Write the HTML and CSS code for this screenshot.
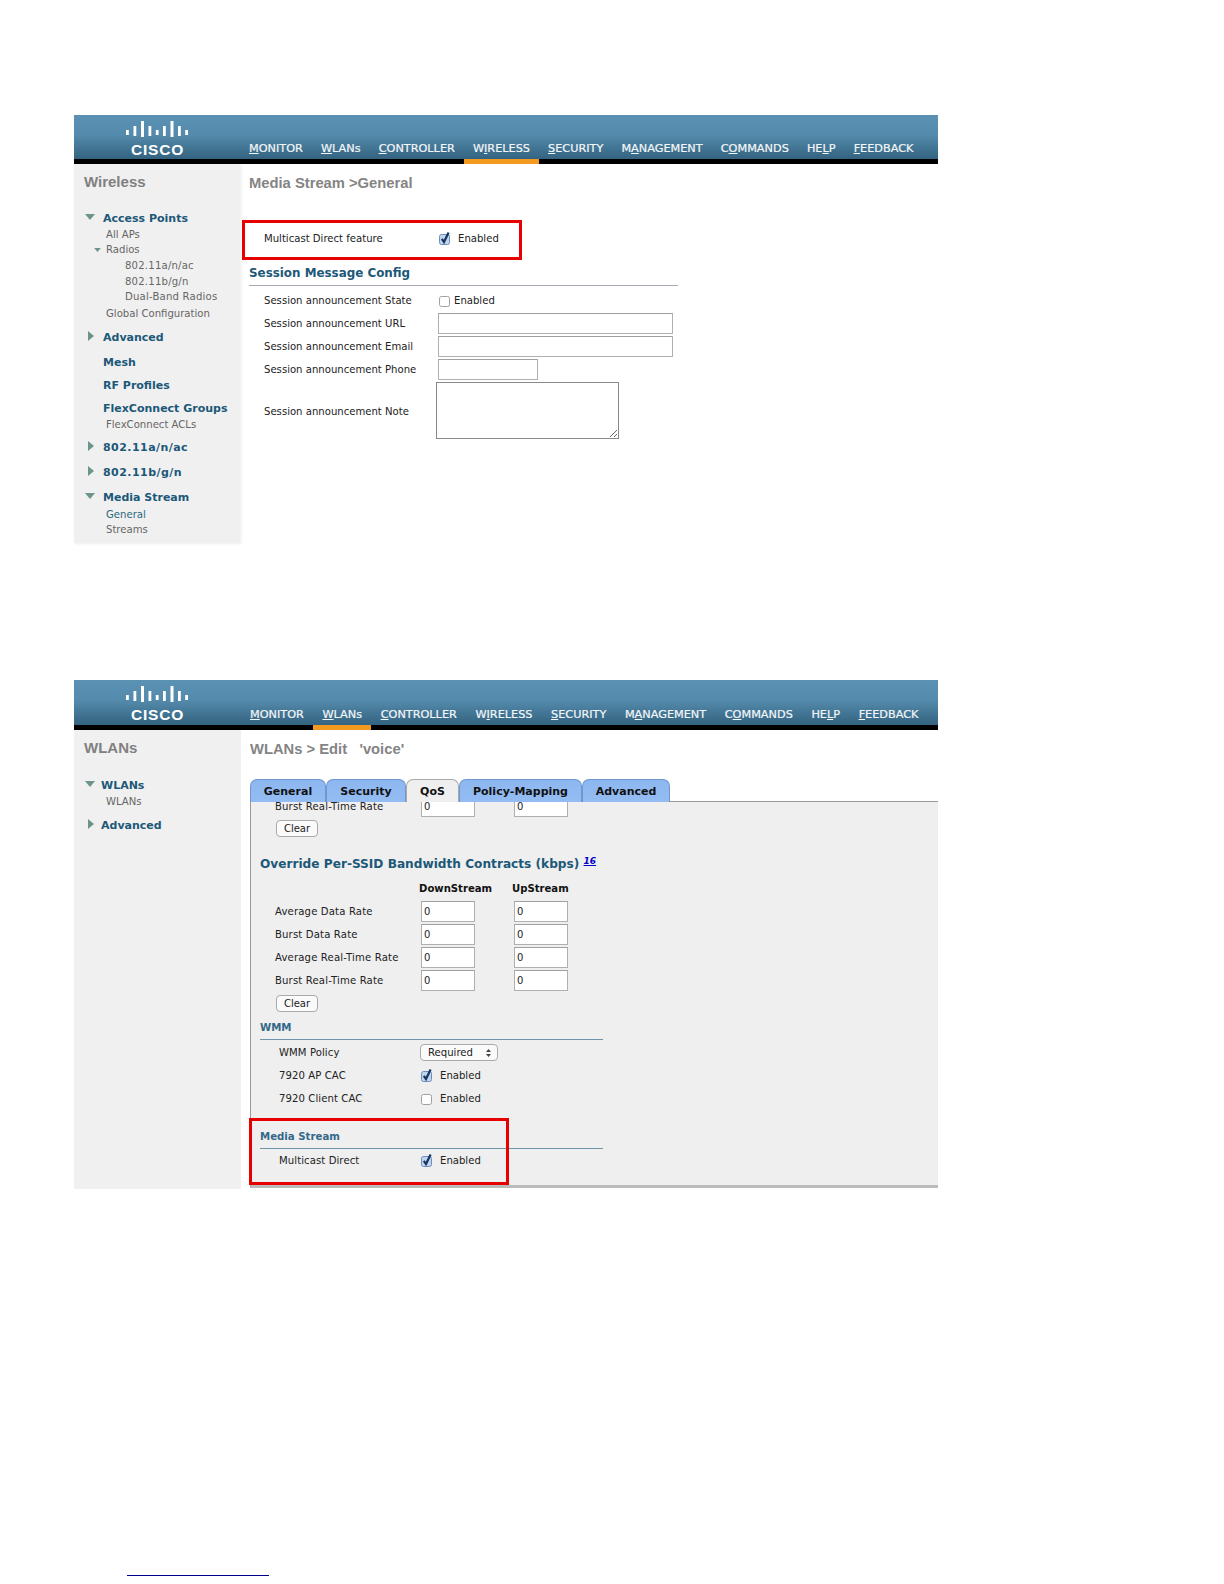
FILE: index.html
```html
<!DOCTYPE html>
<html lang="en">
<head>
<meta charset="utf-8">
<title>Cisco WLC Media Stream</title>
<link rel="stylesheet" href="styles.css">
</head>
<body>
<svg class="defs" width="0" height="0" aria-hidden="true">
  <symbol id="bars" viewBox="0 0 62 17">
    <g fill="#fff">
      <rect x="0" y="9" width="2.8" height="5"/>
      <rect x="7.5" y="5" width="2.8" height="10"/>
      <rect x="15" y="0" width="3" height="16"/>
      <rect x="22.5" y="5" width="2.8" height="10"/>
      <rect x="29.8" y="9" width="2.8" height="5"/>
      <rect x="37" y="5" width="2.8" height="10"/>
      <rect x="44.5" y="0" width="3" height="16"/>
      <rect x="52" y="5" width="2.8" height="10"/>
      <rect x="59.2" y="9" width="2.8" height="5"/>
    </g>
  </symbol>
  <symbol id="chk" viewBox="0 0 13 13">
    <rect x="1.5" y="2.5" width="10" height="10" rx="2" fill="#c2d5ee" stroke="#6c8ebd"/>
    <path d="M3.8 6.8l2.2 3.2 4.6-9.5" fill="none" stroke="#17365f" stroke-width="2.2"/>
  </symbol>
  <symbol id="unchk" viewBox="0 0 13 13">
    <rect x="1.5" y="2.5" width="10" height="10" rx="2" fill="#fff" stroke="#a0a0a0"/>
  </symbol>
  <symbol id="tri-d" viewBox="0 0 10 6"><path d="M0 0h10L5 6z" fill="#6b958c"/></symbol>
  <symbol id="tri-r" viewBox="0 0 6 10"><path d="M0 0v10l6-5z" fill="#6b958c"/></symbol>
  <symbol id="updown" viewBox="0 0 5 8"><path d="M2.5 0L5 3H0zM2.5 8L0 5h5z" fill="#444"/></symbol>
</svg>

<section class="screen screen-one">
  <header class="topbar">
    <div class="logo"><svg class="logo-bars"><use href="#bars"/></svg><span class="logo-word">CISCO</span></div>
    <nav class="nav nav-one">
      <a><u>M</u>ONITOR</a><a><u>W</u>LANs</a><a><u>C</u>ONTROLLER</a><a class="active"><span>W<u>I</u>RELESS</span></a><a><u>S</u>ECURITY</a><a>M<u>A</u>NAGEMENT</a><a>C<u>O</u>MMANDS</a><a>HE<u>L</u>P</a><a><u>F</u>EEDBACK</a>
    </nav>
  </header>
  <div class="body-row">
    <aside class="side side-one">
      <div class="side-title">Wireless</div>
      <div class="side-h"><svg class="tri-d"><use href="#tri-d"/></svg>Access Points</div>
      <div class="side-l1">All APs</div>
      <div class="side-l1"><svg class="tri-s"><use href="#tri-d"/></svg>Radios</div>
      <div class="side-l2 num">802.11a/n/ac</div>
      <div class="side-l2 num">802.11b/g/n</div>
      <div class="side-l2 num">Dual-Band Radios</div>
      <div class="side-l1">Global Configuration</div>
      <div class="side-h"><svg class="tri-r"><use href="#tri-r"/></svg>Advanced</div>
      <div class="side-h">Mesh</div>
      <div class="side-h">RF Profiles</div>
      <div class="side-h">FlexConnect Groups</div>
      <div class="side-l1">FlexConnect ACLs</div>
      <div class="side-h num"><svg class="tri-r"><use href="#tri-r"/></svg>802.11a/n/ac</div>
      <div class="side-h num"><svg class="tri-r"><use href="#tri-r"/></svg>802.11b/g/n</div>
      <div class="side-h"><svg class="tri-d"><use href="#tri-d"/></svg>Media Stream</div>
      <div class="side-l1 current">General</div>
      <div class="side-l1">Streams</div>
    </aside>
    <main class="main main-one">
      <h1 class="page-title">Media Stream &gt;General</h1>
      <div class="form-row feature-row">
        <span class="lbl">Multicast Direct feature</span>
        <span class="check"><svg class="cb"><use href="#chk"/></svg>Enabled</span>
      </div>
      <h2 class="section">Session Message Config</h2>
      <div class="session-form">
        <span class="lbl">Session announcement State</span>
        <span class="check tight"><svg class="cb"><use href="#unchk"/></svg>Enabled</span>
        <span class="lbl">Session announcement URL</span><input class="in in-long">
        <span class="lbl">Session announcement Email</span><input class="in in-long">
        <span class="lbl">Session announcement Phone</span><input class="in in-short">
        <span class="lbl">Session announcement Note</span><textarea class="note"></textarea>
      </div>
    </main>
  </div>
  <div class="callout callout-one"></div>
</section>

<section class="screen screen-two">
  <header class="topbar">
    <div class="logo"><svg class="logo-bars"><use href="#bars"/></svg><span class="logo-word">CISCO</span></div>
    <nav class="nav nav-two">
      <a><u>M</u>ONITOR</a><a class="active"><span><u>W</u>LANs</span></a><a><u>C</u>ONTROLLER</a><a>W<u>I</u>RELESS</a><a><u>S</u>ECURITY</a><a>M<u>A</u>NAGEMENT</a><a>C<u>O</u>MMANDS</a><a>HE<u>L</u>P</a><a><u>F</u>EEDBACK</a>
    </nav>
  </header>
  <div class="body-row">
    <aside class="side side-two">
      <div class="side-title">WLANs</div>
      <div class="side-h tight-h"><svg class="tri-d"><use href="#tri-d"/></svg>WLANs</div>
      <div class="side-l1">WLANs</div>
      <div class="side-h tight-h"><svg class="tri-r"><use href="#tri-r"/></svg>Advanced</div>
    </aside>
    <main class="main main-two">
      <h1 class="page-title">WLANs &gt; Edit &nbsp; 'voice'</h1>
      <div class="tabs">
        <span class="tab t-general">General</span>
        <span class="tab t-security">Security</span>
        <span class="tab t-qos">QoS</span>
        <span class="tab t-policy">Policy-Mapping</span>
        <span class="tab t-advanced">Advanced</span>
      </div>
      <div class="panel">
        <div class="rate-row clipped"><span class="lbl">Burst Real-Time Rate</span><input class="in in-rate" value="0"><input class="in in-rate" value="0"></div>
        <button class="btn">Clear</button>
        <h3 class="override">Override Per-SSID Bandwidth Contracts (kbps) <sup class="ref">16</sup></h3>
        <div class="rate-head"><span>DownStream</span><span>UpStream</span></div>
        <div class="rate-row"><span class="lbl">Average Data Rate</span><input class="in in-rate" value="0"><input class="in in-rate" value="0"></div>
        <div class="rate-row"><span class="lbl">Burst Data Rate</span><input class="in in-rate" value="0"><input class="in in-rate" value="0"></div>
        <div class="rate-row"><span class="lbl">Average Real-Time Rate</span><input class="in in-rate" value="0"><input class="in in-rate" value="0"></div>
        <div class="rate-row"><span class="lbl">Burst Real-Time Rate</span><input class="in in-rate" value="0"><input class="in in-rate" value="0"></div>
        <button class="btn btn-two">Clear</button>
        <h4 class="sub wmm">WMM</h4>
        <div class="qos-row"><span class="lbl">WMM Policy</span><span class="select">Required<svg class="updown"><use href="#updown"/></svg></span></div>
        <div class="qos-row"><span class="lbl">7920 AP CAC</span><span class="check wide"><svg class="cb"><use href="#chk"/></svg>Enabled</span></div>
        <div class="qos-row"><span class="lbl">7920 Client CAC</span><span class="check wide"><svg class="cb"><use href="#unchk"/></svg>Enabled</span></div>
        <h4 class="sub media">Media Stream</h4>
        <div class="qos-row"><span class="lbl">Multicast Direct</span><span class="check wide"><svg class="cb"><use href="#chk"/></svg>Enabled</span></div>
      </div>
    </main>
  </div>
  <div class="callout callout-two"></div>
</section>

<div class="foot-rule"></div>
</body>
</html>
```
FILE: styles.css
```css
* { box-sizing: border-box; }
html, body { margin: 0; padding: 0; background: #fff; }
body { height: 1584px; overflow: hidden; font-family: "DejaVu Sans", sans-serif; font-size: 10.1px; color: #222; }
.defs { position: absolute; }

.screen { position: relative; width: 864px; margin-left: 74px; }
.screen-one { margin-top: 115px; height: 430px; }
.screen-two { margin-top: 135px; height: 508px; }

.topbar { display: flex; border-bottom: 5px solid #000; background: linear-gradient(#5b92b3, #548aab 45%, #336380); }
.screen-one .topbar { height: 49px; }
.screen-two .topbar { height: 50px; }
.logo { width: 166px; padding: 6px 0 0 52px; display: flex; flex-direction: column; }
.logo-bars { width: 62px; height: 17px; }
.logo-word { margin: 5px 0 0 5px; font: bold 15.5px/14px "Liberation Sans", sans-serif; letter-spacing: .8px; color: #fff; }
.nav { display: flex; align-items: flex-end; font-size: 11.25px; color: #f4f7f9; -webkit-text-stroke: .2px #f4f7f9; }
.nav a { position: relative; display: block; line-height: 16px; padding-bottom: 2px; white-space: nowrap; }
.nav-one { padding-left: 9px; gap: 18.1px; }
.nav-two { padding-left: 10px; gap: 18.6px; }
.nav a.active::after { content: ""; position: absolute; left: -9px; right: -9px; bottom: -5px; height: 5px; background: #f29a1f; }

.body-row { display: flex; }
.side { width: 166px; background: #f0f0f0; display: grid; padding-top: 10px; align-content: start; box-shadow: 1px 1px 3px rgba(0,0,0,.08); }
.side-one { height: 379px; grid-template-rows: 36px 16px 15px 16px 16px 15px 17px 24px 25px 23px 23px 16px 23px 25px 25px 17px 15px auto; }
.side-two { height: 459px; grid-template-rows: 37px 16px 24px auto; width: 167px; box-shadow: none; }
.side > div { position: relative; line-height: 16px; white-space: nowrap; }
.side-title { padding-left: 10px; font: bold 15px/16px "Liberation Sans", sans-serif; color: #808080; }
.side-h { padding-left: 29px; font-weight: bold; font-size: 11px; color: #1c5878; }
.side > .side-h { line-height: 17px; }
.side-h.tight-h { padding-left: 27px; }
.side > .side-l1, .side > .side-l2 { line-height: 18px; }
.side-l1 { padding-left: 32px; color: #666; }
.side-l2 { padding-left: 51px; color: #666; }
.side-l2.num { letter-spacing: .2px; }
.side-h.num { letter-spacing: .45px; }
.side-l1.current { color: #2a6a80; }
.tri-d { position: absolute; left: 11px; top: 4px; width: 10px; height: 6px; }
.tri-r { position: absolute; left: 14px; top: 2px; width: 6px; height: 10px; }
.tri-s { position: absolute; left: 20px; top: 7px; width: 7px; height: 4px; }

.main { flex: 1; min-width: 0; padding-top: 8px; }
.main-one { padding-left: 9px; }
.main-two { padding-left: 9px; }
.page-title { margin: 0; padding-top: 1px; height: 20px; font: bold 14.75px/20px "Liberation Sans", sans-serif; color: #848484; }
.lbl { white-space: nowrap; color: #222; }
.form-row { display: flex; align-items: center; }
.feature-row { height: 20px; margin-top: 36px; padding-left: 15px; }
.feature-row .lbl { width: 174px; }
.check { display: flex; align-items: center; white-space: nowrap; }
.cb { width: 13px; height: 13px; margin-right: 7px; flex: none; }
.tight .cb { margin-right: 3px; }
.section { margin: 15px 0 0; width: 429px; padding-bottom: 2px; line-height: 20px; font-size: 11.9px; font-weight: bold; color: #1c5878; border-bottom: 1px solid #a9a9b5; }
.session-form { display: grid; margin-top: 3px; padding-left: 15px; grid-template-columns: 174px 1fr; grid-template-rows: 23px 23px 23px 23px 60px; align-items: center; }
.in { display: block; height: 21px; margin: 0; padding: 0 2px; border: 1px solid #b0b0b0; border-top-color: #a0a0a0; background: #fff; font: 10px "DejaVu Sans", sans-serif; color: #222; border-radius: 0; outline: 0; }
.in-long { width: 235px; }
.in-short { width: 100px; }
.note { display: block; width: 183px; height: 57px; margin: -1px 0 0 -2px; border: 1px solid #888; background: #fff; border-radius: 0; }

.tabs { display: flex; margin-top: 21px; height: 22px; }
.tab { display: flex; align-items: center; justify-content: center; height: 23px; background: linear-gradient(#8db7ef, #93bcf3); border: 1px solid #6f97cd; border-bottom: 0; border-radius: 7px 7px 0 0; font-weight: bold; font-size: 11px; color: #111; }
.t-general { width: 76px; }
.t-security { width: 80px; }
.t-qos { width: 53px; background: #efefef; border-color: #aaa; position: relative; z-index: 1; }
.t-policy { width: 123px; }
.t-advanced { width: 88px; }
.panel { height: 387px; overflow: hidden; background: #efefef; border-left: 1px solid #999; border-top: 1px solid #999; border-bottom: 3px solid #bbb; padding-left: 24px; }
.rate-row { display: flex; align-items: center; height: 23px; }
.rate-row .lbl { width: 146px; letter-spacing: .15px; }
.in-rate { width: 54px; margin-right: 39px; }
.rate-row.clipped { height: 15px; align-items: flex-end; }
.rate-row.clipped .lbl { margin-bottom: 5px; }
.rate-row.clipped .in { height: 15px; padding-bottom: 5px; border-top: 0; }
.btn { display: block; width: 42px; height: 17px; margin: 3px 0 0 1px; padding: 0; border: 1px solid #aaa; border-radius: 4px; background: #fafafa; font: 10px/15px "DejaVu Sans", sans-serif; color: #222; }
.override { margin: 19px 0 0 -15px; line-height: 16px; font-size: 12.15px; font-weight: bold; color: #1c5878; }
.ref { font-size: 9px; font-style: italic; color: #00c; text-decoration: underline; line-height: 0; vertical-align: 4px; }
.rate-head { display: flex; height: 23px; margin: 5px 0 0; padding-left: 144px; align-items: center; font-weight: bold; color: #111; }
.rate-head span:first-child { width: 93px; }
.btn-two { margin-top: 3px; }
.sub { margin: 0 0 0 -15px; width: 343px; font-size: 10.2px; font-weight: bold; color: #33698a; line-height: 14px; border-bottom: 1px solid #6f94a9; }
.wmm { margin-top: 9px; margin-bottom: 1px; padding-bottom: 4px; }
.media { margin-top: 20px; padding-bottom: 4px; }
.qos-row { display: flex; align-items: center; height: 23px; padding-left: 4px; }
.qos-row .lbl { width: 141px; letter-spacing: .08px; }
.select { display: flex; justify-content: space-between; align-items: center; width: 78px; height: 17px; padding: 0 6px 0 7px; background: #fafafa; border: 1px solid #aaa; border-radius: 4px; }
.updown { width: 5px; height: 8px; }

.callout { position: absolute; border: 3px solid #e60000; pointer-events: none; }
.callout-one { left: 168px; top: 105px; width: 280px; height: 40px; }
.callout-two { left: 175px; top: 438px; width: 260px; height: 67px; }

.foot-rule { width: 142px; margin: 387px 0 0 127px; border-top: 1px solid #00008b; }
```
